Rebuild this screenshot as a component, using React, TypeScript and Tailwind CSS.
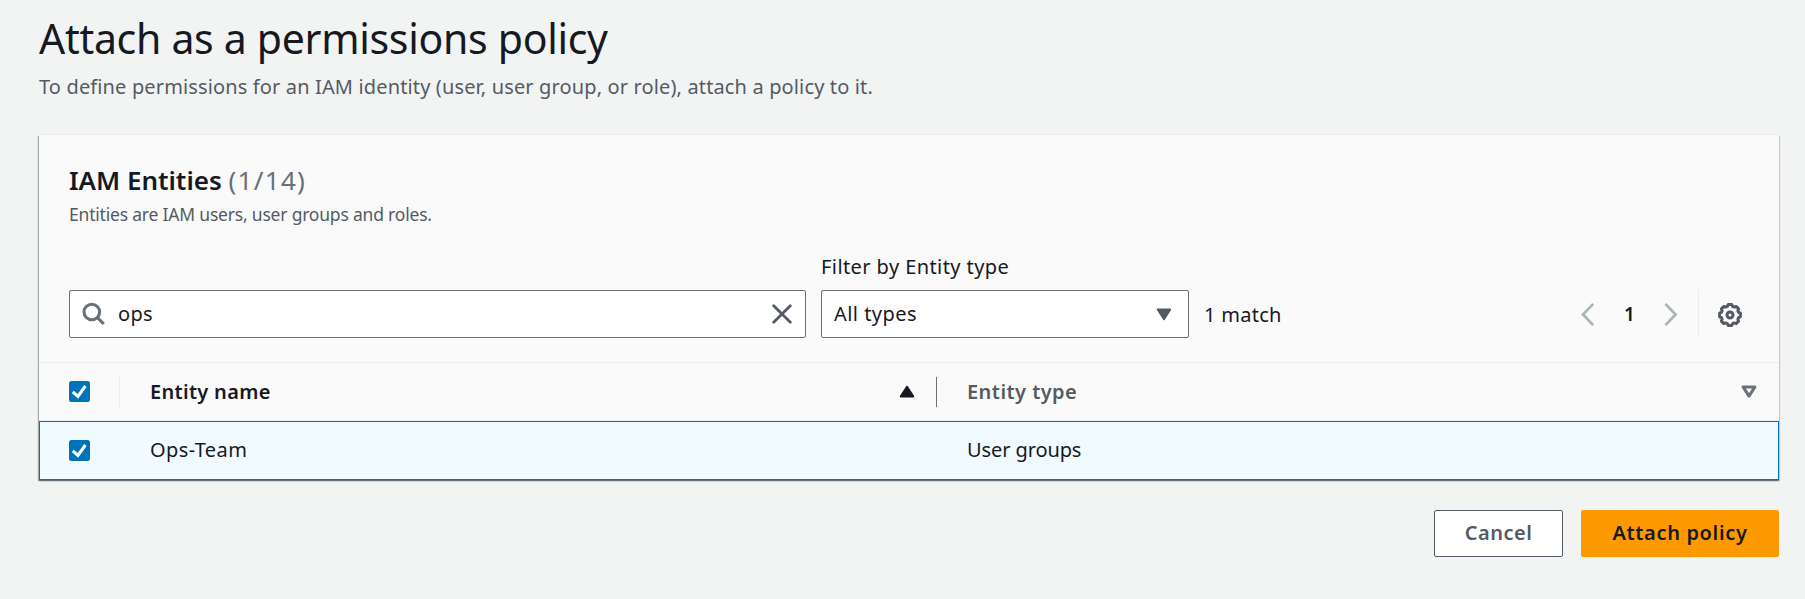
import React from "react";

function CheckedBox() {
  return (
    <svg width="21" height="21" viewBox="0 0 21 21" className="block shrink-0" role="checkbox" aria-checked="true">
      <rect width="21" height="21" rx="2.5" fill="#0073bb" />
      <path d="M3.8 10.8 L8.9 15.4 L16.4 5" fill="none" stroke="#fff" strokeWidth="3" />
    </svg>
  );
}

function SearchIcon() {
  return (
    <svg width="24" height="24" viewBox="0 0 24 24" className="block shrink-0" fill="none" stroke="#687078" strokeWidth="3.1">
      <circle cx="9.8" cy="10" r="7.8" />
      <path d="M15.2 15.4 L21.8 22" />
    </svg>
  );
}

function ClearIcon() {
  return (
    <svg width="20" height="20" viewBox="0 0 20 20" className="block" fill="none" stroke="#545b64" strokeWidth="2.8" strokeLinecap="round">
      <path d="M1.7 1.7 L18.3 18.3 M18.3 1.7 L1.7 18.3" />
    </svg>
  );
}

function GearIcon() {
  return (
    <svg width="24" height="24" viewBox="0 0 24 24" className="block" fill="none" stroke="#545b64" strokeWidth="3" strokeLinejoin="round">
      <path d="M10.2 1.6 H13.8 L14.6 3.4 L16.2 4.1 L18.1 3.4 L20.6 5.9 L19.9 7.8 L20.6 9.4 L22.4 10.2 V13.8 L20.6 14.6 L19.9 16.2 L20.6 18.1 L18.1 20.6 L16.2 19.9 L14.6 20.6 L13.8 22.4 H10.2 L9.4 20.6 L7.8 19.9 L5.9 20.6 L3.4 18.1 L4.1 16.2 L3.4 14.6 L1.6 13.8 V10.2 L3.4 9.4 L4.1 7.8 L3.4 5.9 L5.9 3.4 L7.8 4.1 L9.4 3.4 Z" />
      <circle cx="12" cy="12" r="3" />
    </svg>
  );
}

function Chevron({ direction }: { direction: "left" | "right" }) {
  return (
    <svg width="14" height="24" viewBox="0 0 14 24" className="block" fill="none" stroke="#aab7b8" strokeWidth="2.8">
      <path d={direction === "left" ? "M12.2 1.9 L2 12.5 L12.2 23.1" : "M1.4 1.9 L11.6 12.5 L1.4 23.1"} />
    </svg>
  );
}

function Triangle({ up = false, color }: { up?: boolean; color: string }) {
  return (
    <svg width="16" height="13" viewBox="0 0 16 13" className="block" fill={color} stroke={color} strokeWidth="2" strokeLinejoin="round">
      <path d={up ? "M8 1.8 L14.2 11.4 H1.8 Z" : "M1.8 1.4 H14.2 L8 11.2 Z"} />
    </svg>
  );
}

function SortIcon() {
  return (
    <svg width="16" height="13" viewBox="0 0 16 13" className="block" fill="none" stroke="#687078" strokeWidth="3" strokeLinejoin="round">
      <path d="M2.1 1.9 H13.9 L8 11.1 Z" />
    </svg>
  );
}

export default function App() {
  return (
    <main className="h-[599px] w-full bg-[#f2f3f3] pt-[13px] pr-[26px] pl-[39px] font-['Noto_Sans',sans-serif] text-[20px] leading-[30px] text-[#16191f]">
      <h1 className="text-[41px] leading-[50px] tracking-[-0.3px]">Attach as a permissions policy</h1>
      <p className="mt-[9px] tracking-[0.14px] text-[#545b64]">
        To define permissions for an IAM identity (user, user group, or role), attach a policy to it.
      </p>

      <section className="mt-[33px] h-[345px] bg-[#fafafa] shadow-[0_-1px_0_0_#e6ecec,0_1px_1px_0_rgba(0,28,36,0.3),1px_1px_1px_0_rgba(0,28,36,0.15),-1px_1px_1px_0_rgba(0,28,36,0.3)]">
        <div className="h-[227px] pt-[27px] pl-[30px]">
          <h2 className="text-[26px] leading-[36px] font-semibold tracking-[-0.02px]">
            IAM Entities <span className="font-normal tracking-[1.3px] text-[#687078]">(1/14)</span>
          </h2>
          <p className="mt-[3px] text-[17.5px] leading-[26px] tracking-[-0.2px] text-[#545b64]">
            Entities are IAM users, user groups and roles.
          </p>

          <div className="mt-[25px] flex items-end">
            <div className="flex h-[48px] w-[737px] items-center rounded-[2px] border border-[#687078] bg-white pr-[13px] pl-[12px]">
              <SearchIcon />
              <span className="flex-1 pb-[1px] pl-[12px] tracking-[0.3px]">ops</span>
              <ClearIcon />
            </div>
            <div className="ml-[15px] flex flex-col gap-[8px]">
              <label className="tracking-[0.42px]">Filter by Entity type</label>
              <div className="flex h-[48px] w-[368px] items-center justify-between rounded-[2px] border border-[#687078] bg-white pr-[16px] pl-[12px]">
                <span className="pb-[1px] tracking-[0.46px]">All types</span>
                <Triangle color="#545b64" />
              </div>
            </div>
            <div className="ml-[15px] flex h-[48px] items-center pt-[2px] tracking-[0.27px]">1 match</div>
            <div className="mr-[37px] ml-auto flex h-[48px] items-center">
              <Chevron direction="left" />
              <span className="w-[69px] pb-[1px] text-center text-[19px] font-semibold">1</span>
              <Chevron direction="right" />
              <span className="mr-[19px] ml-[20px] h-[48px] w-px bg-[#eaeded]" />
              <div className="pt-[1px]">
                <GearIcon />
              </div>
            </div>
          </div>
        </div>

        <div className="flex h-[59px] items-center border-y border-[#eaeded] pl-[30px] font-semibold">
          <CheckedBox />
          <span className="ml-[29px] h-[30px] w-px bg-[#eaeded]" />
          <span className="ml-[30px] tracking-[0.3px]">Entity name</span>
          <span className="ml-auto">
            <Triangle up color="#16191f" />
          </span>
          <span className="ml-[21px] h-[30px] w-px bg-[#687078]" />
          <div className="flex w-[842px] items-center justify-between pr-[22px] pl-[30px] tracking-[0.45px] text-[#545b64]">
            Entity type
            <SortIcon />
          </div>
        </div>

        <div className="flex h-[59px] items-center border border-[#0073bb] bg-[#f1faff] pl-[29px]">
          <div className="pb-[1px]">
            <CheckedBox />
          </div>
          <span className="ml-[60px] pb-[1px] tracking-[0.4px]">Ops-Team</span>
          <span className="ml-auto w-[811px] pb-[1px] tracking-[-0.1px]">User groups</span>
        </div>
      </section>

      <div className="mt-[30px] flex justify-end gap-[18px] font-semibold">
        <button className="flex h-[47px] w-[129px] items-center justify-center rounded-[2px] border border-[#545b64] bg-white pb-[2px] tracking-[0.5px] text-[#545b64]">
          Cancel
        </button>
        <button className="flex h-[47px] w-[198px] items-center justify-center rounded-[2px] bg-[#ff9900] pb-[2px] tracking-[0.66px]">
          Attach policy
        </button>
      </div>
    </main>
  );
}
